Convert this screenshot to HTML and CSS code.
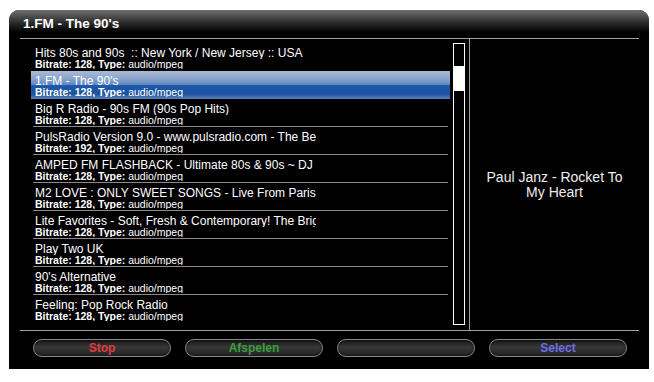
FILE: index.html
```html
<!DOCTYPE html>
<html lang="en">
<head>
    <meta charset="UTF-8">
    <title>1.FM - The 90's</title>
    <link rel="stylesheet" href="styles.css">
</head>
<body>
    <div class="panel">
        <div class="titlebar">1.FM - The 90's</div>
        <div class="main">
            <div class="list">
                <div class="rows">
                    <div class="row">
                        <div class="name">Hits 80s and 90s  :: New York / New Jersey :: USA</div>
                        <div class="info"><b>Bitrate: 128, Type:</b> audio/mpeg</div>
                    </div>
                    <div class="row selected">
                        <div class="name">1.FM - The 90's</div>
                        <div class="info"><b>Bitrate: 128, Type:</b> audio/mpeg</div>
                    </div>
                    <div class="row">
                        <div class="name">Big R Radio - 90s FM (90s Pop Hits)</div>
                        <div class="info"><b>Bitrate: 128, Type:</b> audio/mpeg</div>
                    </div>
                    <div class="row">
                        <div class="name">PulsRadio Version 9.0 - www.pulsradio.com - The Best Trance</div>
                        <div class="info"><b>Bitrate: 192, Type:</b> audio/mpeg</div>
                    </div>
                    <div class="row">
                        <div class="name">AMPED FM FLASHBACK - Ultimate 80s &amp; 90s ~ DJ Let's Go</div>
                        <div class="info"><b>Bitrate: 128, Type:</b> audio/mpeg</div>
                    </div>
                    <div class="row">
                        <div class="name">M2 LOVE : ONLY SWEET SONGS - Live From Paris France</div>
                        <div class="info"><b>Bitrate: 128, Type:</b> audio/mpeg</div>
                    </div>
                    <div class="row">
                        <div class="name">Lite Favorites - Soft, Fresh &amp; Contemporary! The Bright Mix</div>
                        <div class="info"><b>Bitrate: 128, Type:</b> audio/mpeg</div>
                    </div>
                    <div class="row">
                        <div class="name">Play Two UK</div>
                        <div class="info"><b>Bitrate: 128, Type:</b> audio/mpeg</div>
                    </div>
                    <div class="row">
                        <div class="name">90's Alternative</div>
                        <div class="info"><b>Bitrate: 128, Type:</b> audio/mpeg</div>
                    </div>
                    <div class="row last">
                        <div class="name">Feeling: Pop Rock Radio</div>
                        <div class="info"><b>Bitrate: 128, Type:</b> audio/mpeg</div>
                    </div>
                </div>
                <div class="scrollbar"><div class="thumb"></div></div>
            </div>
            <div class="nowplaying">Paul Janz - Rocket To<br>My Heart</div>
        </div>
        <div class="buttons">
            <div class="btn red">Stop</div>
            <div class="btn green">Afspelen</div>
            <div class="btn"></div>
            <div class="btn blue">Select</div>
        </div>
    </div>
</body>
</html>
```

FILE: styles.css
```css
body {
    margin: 0;
    background-color: #ffffff;
    font-family: "Liberation Sans", Arial, sans-serif;
}
.panel {
    margin: 10px 0 0 9px;
    width: 640px;
    height: 359px;
    background-color: #000;
    border-radius: 10px 10px 0 0;
    color: #fff;
}
.titlebar {
    height: 28px;
    line-height: 28px;
    padding-left: 14px;
    font-size: 13.5px;
    font-weight: bold;
    border-radius: 10px 10px 0 0;
    background: linear-gradient(to bottom, #707070 0%, #333 40%, #000 80%);
}
.main {
    display: flex;
    margin: 0 10px 0 11px;
    height: 293px;
    box-sizing: border-box;
    border-top: 1px solid #a0a0a0;
    border-bottom: 1px solid #a0a0a0;
}
.list {
    display: flex;
    align-items: flex-start;
    width: 450px;
    box-sizing: border-box;
    padding: 4px 0 0 11px;
    border-right: 1px solid #a0a0a0;
}
.rows {
    width: 419px;
}
.row {
    position: relative;
    height: 28px;
    box-sizing: border-box;
    padding: 4px 0 0 4px;
}
.row::after {
    content: "";
    position: absolute;
    left: 2px;
    right: 2px;
    bottom: 0;
    height: 1px;
    background-color: #8a8a8a;
}
.row:first-child::after,
.row.selected::after,
.row.last::after {
    display: none;
}
.row.selected {
    background: linear-gradient(to bottom, #a8bbd6 0%, #86a2cb 30%, #6389c2 48%, #1d58a8 52%, #1a52a0 82%, #5d80b8 100%);
}
.name {
    width: 281px;
    overflow: hidden;
    white-space: pre;
    font-size: 12px;
    line-height: 12px;
}
.info {
    width: 281px;
    overflow: hidden;
    white-space: nowrap;
    font-size: 10.5px;
    line-height: 10px;
}
.scrollbar {
    margin-left: 3px;
    width: 12px;
    height: 282px;
    box-sizing: border-box;
    border: 1px solid #fff;
}
.thumb {
    margin-top: 22px;
    height: 25px;
    background-color: #fff;
}
.nowplaying {
    flex: 1;
    display: flex;
    align-items: center;
    justify-content: center;
    text-align: center;
    font-size: 14px;
    line-height: 15px;
    color: #eee;
}
.buttons {
    display: flex;
    gap: 14px;
    padding: 8px 0 0 24px;
}
.btn {
    width: 138px;
    height: 18px;
    box-sizing: border-box;
    border-radius: 9px;
    border: 1px solid #8a8a8a;
    background: linear-gradient(to bottom, #151515 0%, #383838 45%, #202020 100%);
    box-shadow: inset 0 0 2px #000;
    text-align: center;
    font-size: 12px;
    font-weight: bold;
    line-height: 16px;
}
.red {
    color: #e03c3c;
}
.green {
    color: #3c9e3c;
}
.blue {
    color: #6d6de6;
}
```
